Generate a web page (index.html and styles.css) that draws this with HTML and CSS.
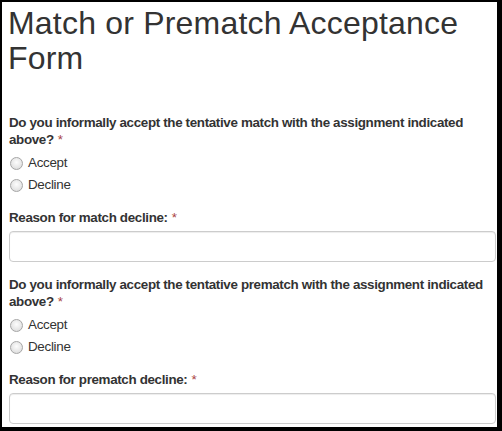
FILE: index.html
```html
<!DOCTYPE html>
<html>
<head>
<meta charset="utf-8">
<link rel="stylesheet" href="styles.css">
</head>
<body>
<div class="frame">
  <div class="page">
    <h1 class="title">Match or Prematch Acceptance Form</h1>
    <div class="group first">
      <div class="question">Do you informally accept the tentative match with the assignment indicated above?<span class="req">*</span></div>
      <label class="radio"><span class="dot"></span>Accept</label>
      <label class="radio"><span class="dot"></span>Decline</label>
      <div class="label">Reason for match decline:<span class="req">*</span></div>
      <div class="input"></div>
    </div>
    <div class="group">
      <div class="question">Do you informally accept the tentative prematch with the assignment indicated above?<span class="req">*</span></div>
      <label class="radio"><span class="dot"></span>Accept</label>
      <label class="radio"><span class="dot"></span>Decline</label>
      <div class="label">Reason for prematch decline:<span class="req">*</span></div>
      <div class="input"></div>
    </div>
  </div>
</div>
</body>
</html>
```
FILE: styles.css
```css
html, body {
  margin: 0;
  padding: 0;
  background: #000;
}
.frame {
  width: 502px;
  height: 431px;
  padding: 2px 5px 4px 2px;
  box-sizing: border-box;
}
.page {
  background: #fff;
  height: 425px;
  overflow: hidden;
  padding: 4px 1px 0 7px;
  box-sizing: border-box;
  font-family: "Liberation Sans", Arial, sans-serif;
  color: #333;
}
.title {
  margin: 0 0 0 -1px;
  font-size: 32px;
  line-height: 35.2px;
  font-weight: normal;
  letter-spacing: 0.2px;
  color: #333;
}
.group {
  display: flex;
  flex-direction: column;
  margin-top: 14px;
}
.group.first {
  margin-top: 37.6px;
}
.question, .label {
  font-size: 13.4px;
  line-height: 17px;
  font-weight: bold;
  letter-spacing: -0.35px;
}
.req {
  display: inline-block;
  margin-left: 4px;
  color: #a94442;
  font-weight: normal;
  letter-spacing: 0;
}
.question {
  margin-bottom: 4px;
}
.radio {
  display: flex;
  align-items: center;
  height: 22px;
  font-size: 13.4px;
  line-height: 22px;
  letter-spacing: -0.3px;
}
.dot {
  width: 11px;
  height: 11px;
  border: 1px solid #a6a6a6;
  border-radius: 50%;
  background: radial-gradient(circle at 50% 40%, #fdfdfd 0%, #e6e6e6 60%, #d4d4d4 100%);
  margin-left: 1px;
  margin-right: 5px;
  flex: none;
}
.label {
  margin-top: 13px;
}
.input {
  margin-top: 5px;
  height: 31px;
  border: 1px solid #ccc;
  border-radius: 4px;
  box-sizing: border-box;
  box-shadow: inset 0 1px 1px rgba(0,0,0,0.075);
}
```
